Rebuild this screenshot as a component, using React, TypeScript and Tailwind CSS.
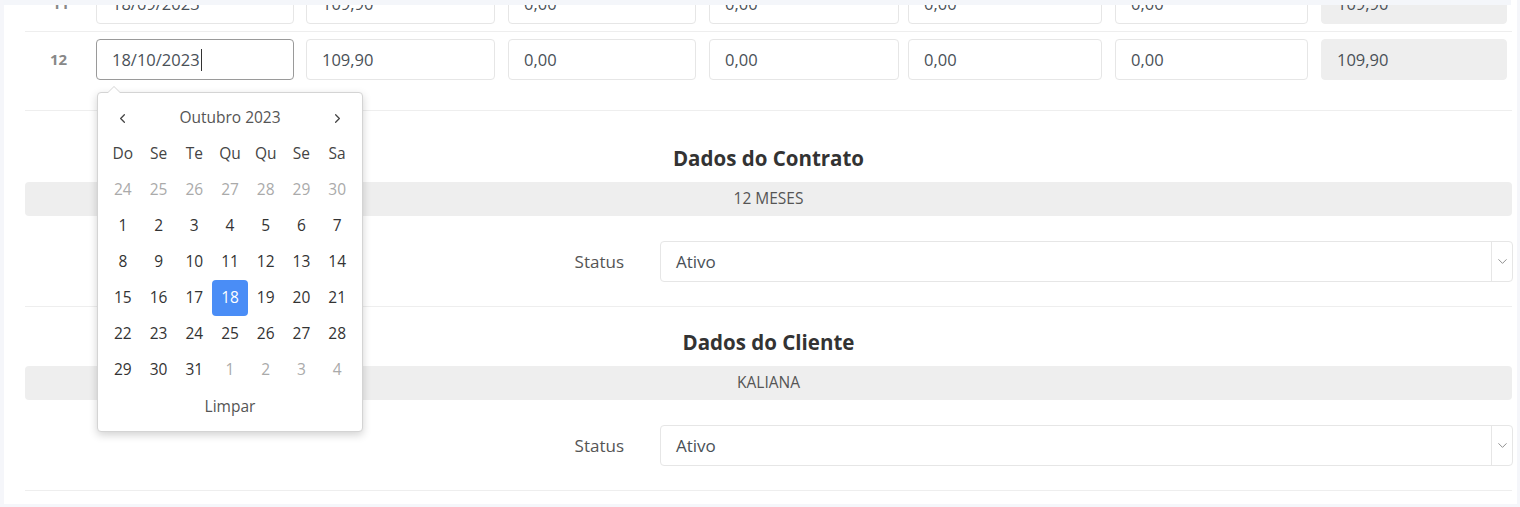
import { ChevronDown, ChevronLeft, ChevronRight } from "lucide-react";

const WIDTHS = ["w-[198px]", "w-[189px]", "w-[188px]", "w-[190px]", "w-[194px]", "w-[193px]", "w-[186px]"];
const GAPS = ["ml-0", "ml-[12px]", "ml-[13px]", "ml-[13px]", "ml-[9px]", "ml-[13px]", "ml-[13px]"];

const ROW_11 = ["18/09/2023", "109,90", "0,00", "0,00", "0,00", "0,00", "109,90"];
const ROW_12 = ["18/10/2023", "109,90", "0,00", "0,00", "0,00", "0,00", "109,90"];

const WEEK = ["Do", "Se", "Te", "Qu", "Qu", "Se", "Sa"];

// [day, inMonth]
const DAYS: [number, boolean][] = [
  ...[24, 25, 26, 27, 28, 29, 30].map((d) => [d, false] as [number, boolean]),
  ...Array.from({ length: 31 }, (_, i) => [i + 1, true] as [number, boolean]),
  ...[1, 2, 3, 4].map((d) => [d, false] as [number, boolean]),
];

function Cell({ value, index, focused }: { value: string; index: number; focused?: boolean }) {
  const readOnly = index === 6;
  return (
    <div
      className={`${WIDTHS[index]} ${GAPS[index]} flex h-[41px] shrink-0 items-center rounded-[4px] border px-[15px] pt-[1px] text-[16.5px] text-[#495057] ${
        readOnly ? "border-[#eeeeee] bg-[#eeeeee]" : focused ? "border-[#9a9a9a] bg-white" : "border-[#e6e6e6] bg-white"
      }`}
    >
      {value}
      {focused && <span className="ml-[1px] inline-block h-[22px] w-px bg-[#333]" />}
    </div>
  );
}

function Calendar() {
  return (
    <div className="absolute left-[93px] top-[112px] z-10 w-[266px] rounded-[4px] border border-[#d4d4d4] bg-white px-[7px] pb-[6px] pt-[7px] shadow-[0_3px_8px_rgba(0,0,0,0.18)]">
      {/* caret */}
      <div className="absolute -top-[7px] left-[9px] h-0 w-0 border-x-[7px] border-b-[7px] border-x-transparent border-b-[#d4d4d4]" />
      <div className="absolute -top-[6px] left-[10px] h-0 w-0 border-x-[6px] border-b-[6px] border-x-transparent border-b-white" />
      <div className="grid grid-cols-7 text-[15.5px] text-[#444]">
        <div className="flex h-[36px] items-center justify-center text-[#444]">
          <ChevronLeft className="h-[15px] w-[15px]" strokeWidth={2} />
        </div>
        <div className="col-span-5 flex h-[36px] items-center justify-center text-[#555]">Outubro 2023</div>
        <div className="flex h-[36px] items-center justify-center text-[#444]">
          <ChevronRight className="h-[15px] w-[15px]" strokeWidth={2} />
        </div>
        {WEEK.map((w, i) => (
          <div key={i} className="flex h-[36px] items-center justify-center text-[#444]">
            {w}
          </div>
        ))}
        {DAYS.map(([d, inMonth], i) => {
          const selected = inMonth && d === 18;
          return (
            <div
              key={i}
              className={`flex h-[36px] items-center justify-center rounded-[4px] ${
                selected ? "bg-[#4a8df6] text-white" : inMonth ? "text-[#333]" : "text-[#aaaaaa]"
              }`}
            >
              {d}
            </div>
          );
        })}
        <div className="col-span-7 flex h-[37px] items-center justify-center text-[#555]">Limpar</div>
      </div>
    </div>
  );
}

function Section({ title, value, extraTop }: { title: string; value: string; extraTop?: boolean }) {
  return (
    <div className={`border-b border-[#eeeeee] ${extraTop ? "pt-[34px]" : "pt-[22px]"} pb-[24px]`}>
      <h3 className="text-center text-[20.5px] font-bold leading-[26px] text-[#333]">{title}</h3>
      <div className="mt-[11px] flex h-[34px] items-center justify-center rounded-[4px] bg-[#eeeeee] text-[15.5px] text-[#555]">
        {value}
      </div>
      <div className="mt-[25px] flex items-center">
        <div className="w-[635px] shrink-0 pr-[36px] pt-[1px] text-right text-[17px] text-[#555]">Status</div>
        <div className="flex h-[41px] w-[853px] shrink-0 items-center rounded-[4px] border border-[#e6e6e6] bg-white">
          <div className="flex-1 px-[15px] text-[17px] text-[#495057]">Ativo</div>
          <div className="flex h-full w-[21px] items-center justify-center border-l border-[#e6e6e6]">
            <ChevronDown className="h-[15px] w-[15px] text-[#888]" strokeWidth={1.5} />
          </div>
        </div>
      </div>
    </div>
  );
}

export default function App() {
  return (
    <div
      className="relative h-[507px] w-[1520px] overflow-hidden bg-[#f5f6fa]"
      style={{ fontFamily: '"Open Sans", "Noto Sans", sans-serif' }}
    >
      <div className="absolute left-[4px] top-[-20px] h-[524px] w-[1513px] bg-white">
        <div className="relative pl-[21px] pr-[5px]">
          {/* row 11 */}
          <div className="flex items-center border-b border-[#eeeeee] pb-[7px] pt-[3px]">
            <div className="w-[71px] shrink-0 text-center text-[15px] font-bold text-[#888]">11</div>
            {ROW_11.map((v, i) => (
              <Cell key={i} value={v} index={i} />
            ))}
          </div>
          {/* row 12 */}
          <div className="flex items-center border-b border-[#eeeeee] pb-[30px] pt-[7px]">
            <div className="w-[71px] shrink-0 pr-[4px] text-center text-[15px] font-bold text-[#888]">12</div>
            {ROW_12.map((v, i) => (
              <Cell key={i} value={v} index={i} focused={i === 0} />
            ))}
          </div>
          <Calendar />

          <Section title="Dados do Contrato" value="12 MESES" extraTop />
          <Section title="Dados do Cliente" value="KALIANA" />
        </div>
      </div>
      {/* top sticky strip */}
      <div className="absolute left-[3px] top-0 h-[5px] w-[1508px] bg-[#f4f6fa]" />
    </div>
  );
}
